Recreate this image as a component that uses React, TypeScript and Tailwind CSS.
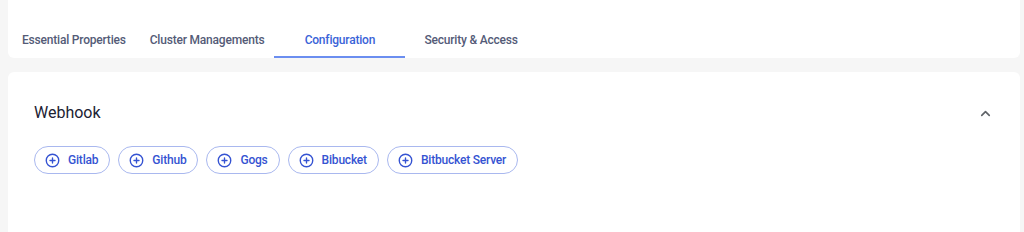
import React from "react";

const blue = "text-[#3553d2]";

function PlusCircle() {
  return (
    <svg width="15" height="15" viewBox="0 0 24 24" fill="none" stroke="currentColor" strokeWidth="2.2" strokeLinecap="round" strokeLinejoin="round">
      <circle cx="12" cy="12" r="10" />
      <path d="M8 12h8" />
      <path d="M12 8v8" />
    </svg>
  );
}

function Chevron() {
  return (
    <svg width="15" height="15" viewBox="0 0 24 24" fill="none" stroke="#5f6368" strokeWidth="2.6" strokeLinecap="round" strokeLinejoin="round">
      <path d="m6 15 6-6 6 6" />
    </svg>
  );
}

const buttons = ["Gitlab", "Github", "Gogs", "Bibucket", "Bitbucket Server"];

export default function App() {
  return (
    <div
      className="w-[1024px] h-[232px] bg-[#f6f6f6] overflow-hidden pl-2 pr-1"
      style={{ fontFamily: "Roboto, 'Liberation Sans', sans-serif" }}
    >
      <div className="h-[58px] bg-white rounded-b-md flex items-end text-[12px] font-medium tracking-[-0.2px] text-[#545b77]">
        <div className="ml-[14px] h-[35px] flex items-center border-b-2 border-transparent">Essential Properties</div>
        <div className="ml-[24px] h-[35px] flex items-center border-b-2 border-transparent">Cluster Managements</div>
        <div className="ml-[10px] w-[131px] h-[35px] flex items-center justify-center border-b-2 border-[#6b8ef0] text-[#3a63d8]">Configuration</div>
        <div className="ml-[19px] h-[35px] flex items-center border-b-2 border-transparent">Security &amp; Access</div>
      </div>
      <div className="mt-[14px] h-[220px] bg-white rounded-t-md pl-[26px] pr-[27px] pt-[29px]">
        <div className="flex items-center justify-between h-[24px]">
          <div className="text-[16px] text-[#1c2233]">Webhook</div>
          <Chevron />
        </div>
        <div className="mt-[21px] flex gap-[8px]">
          {buttons.map((b) => (
            <button
              key={b}
              className={`h-[28px] rounded-full border border-[#a9b8ef] pl-[10px] pr-[11px] flex items-center gap-[8px] text-[12px] font-medium tracking-[-0.2px] ${blue}`}
            >
              <PlusCircle />
              <span>{b}</span>
            </button>
          ))}
        </div>
      </div>
    </div>
  );
}
